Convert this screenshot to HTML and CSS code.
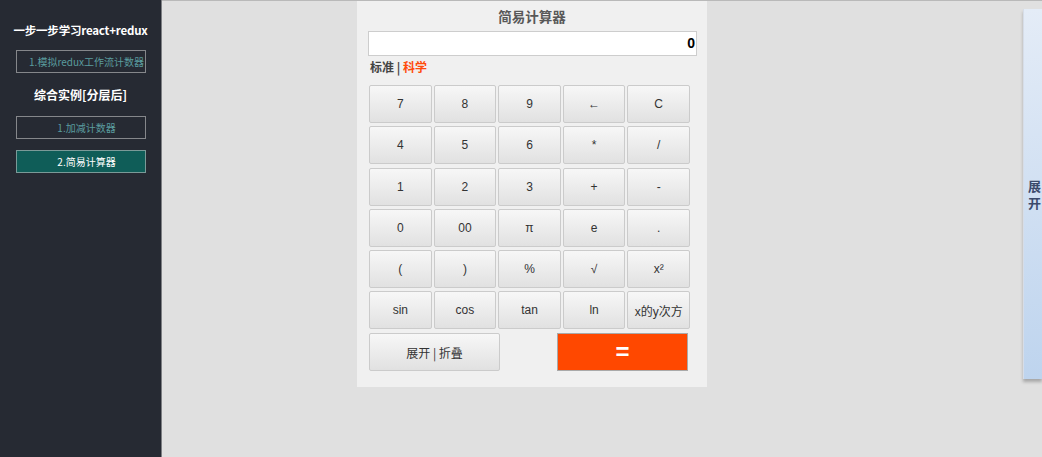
FILE: index.html
```html
<!DOCTYPE html>
<html lang="zh-CN">
<head>
<meta charset="utf-8">
<title>简易计算器</title>
<link rel="stylesheet" href="styles.css">
</head>
<body>
<div class="layout">
  <aside class="sidebar">
    <h1 class="side-title">一步一步学习react+redux</h1>
    <a class="side-link">1.模拟redux工作流计数器</a>
    <h2 class="side-sub">综合实例[分层后]</h2>
    <a class="side-link">1.加减计数器</a>
    <a class="side-link active">2.简易计算器</a>
  </aside>
  <main class="main">
    <section class="calc">
      <h3 class="calc-title">简易计算器</h3>
      <div class="display">0</div>
      <div class="modes"><span class="mode">标准</span> | <span class="mode on">科学</span></div>
      <div class="keys">
        <button class="key">7</button><button class="key">8</button><button class="key">9</button><button class="key">←</button><button class="key">C</button>
        <button class="key">4</button><button class="key">5</button><button class="key">6</button><button class="key">*</button><button class="key">/</button>
        <button class="key">1</button><button class="key">2</button><button class="key">3</button><button class="key">+</button><button class="key">-</button>
        <button class="key">0</button><button class="key">00</button><button class="key">π</button><button class="key">e</button><button class="key">.</button>
        <button class="key">(</button><button class="key">)</button><button class="key">%</button><button class="key">√</button><button class="key">x²</button>
        <button class="key">sin</button><button class="key">cos</button><button class="key">tan</button><button class="key">ln</button><button class="key">x的y次方</button>
      </div>
      <div class="bottom-row">
        <button class="key wide">展开 | 折叠</button>
        <button class="key wide equals">=</button>
      </div>
    </section>
  </main>
</div>
<div class="drawer-tab">展<br>开</div>
</body>
</html>
```
FILE: styles.css
```css
html, body {
  margin: 0;
  padding: 0;
  height: 100%;
}
body {
  background: #e0e0e0;
  font-family: "Noto Sans CJK SC", "Liberation Sans", sans-serif;
  overflow: hidden;
}
.layout {
  display: flex;
  height: 457px;
}
.sidebar {
  width: 161px;
  border-right: 1px solid #7d7f83;
  background: #262a33;
  display: flex;
  flex-direction: column;
  align-items: center;
  padding-top: 21px;
  box-sizing: content-box;
}
.side-title {
  margin: 0;
  font-size: 11.5px;
  font-weight: bold;
  color: #fff;
  line-height: 18px;
  letter-spacing: -0.2px;
}
.side-sub {
  margin: 12px 0 11px;
  font-size: 12px;
  font-weight: bold;
  color: #fff;
  line-height: 20px;
}
.side-link {
  display: block;
  border: 1px solid #85878b;
  color: #5a9c9e;
  font-size: 10px;
  text-align: center;
  padding-left: 12px;
  box-sizing: border-box;
  width: 130px;
  height: 23px;
  line-height: 21px;
  white-space: nowrap;
  overflow: hidden;
}
.side-title + .side-link {
  margin-top: 11px;
}
.side-link + .side-link {
  margin-top: 11px;
}
.side-link.active {
  background: #0f5d58;
  color: #fff;
  border-color: #7a9a98;
}
.main {
  flex: 1;
  border-top: 1px solid #b9b9b9;
  padding-left: 195px;
}
.calc {
  width: 350px;
  height: 386px;
  background: #f0f0f0;
  padding: 0 11px;
  box-sizing: border-box;
}
.calc-title {
  margin: 0;
  text-align: center;
  font-size: 13.5px;
  font-weight: bold;
  color: #585858;
  line-height: 30px;
}
.display {
  height: 25px;
  width: 329px;
  background: #fff;
  border: 1px solid #cdcdcd;
  box-sizing: border-box;
  text-align: right;
  font-family: "Liberation Sans", sans-serif;
  font-weight: bold;
  font-size: 14px;
  line-height: 23px;
  padding-right: 1px;
  color: #000;
}
.modes {
  margin: 1px 0 0 2px;
  font-size: 12px;
  font-weight: bold;
  color: #444;
  line-height: 20px;
}
.mode.on {
  color: #ff4a0a;
}
.keys {
  margin: 8px 0 0 1px;
  width: 321px;
  display: grid;
  grid-template-columns: repeat(5, 1fr);
  column-gap: 2px;
  row-gap: 3.3px;
}
.key {
  height: 38px;
  margin: 0;
  padding: 0;
  border: 1px solid #cbcbcb;
  border-radius: 2px;
  background: linear-gradient(#f7f7f7, #e1e1e1);
  font-family: "Liberation Sans", "Noto Sans CJK SC", sans-serif;
  font-size: 12px;
  color: #333;
  white-space: nowrap;
}
.bottom-row {
  margin: 4px 0 0 1px;
  width: 319px;
  display: flex;
  justify-content: space-between;
}
.key.wide {
  width: 131px;
  font-family: "Noto Sans CJK SC", "Liberation Sans", sans-serif;
}
.key.equals {
  background: #ff4800;
  border-color: #a9a9a9;
  border-radius: 0;
  color: #fff;
  font-family: "Liberation Sans", sans-serif;
  font-weight: bold;
  font-size: 24px;
}
.drawer-tab {
  position: absolute;
  right: 0;
  top: 9px;
  width: 14px;
  height: 370px;
  border-left: 1px solid #d6dde8;
  background: linear-gradient(#e4ecf7, #bed4ee);
  box-shadow: 0 3px 3px rgba(0, 0, 0, 0.25);
  color: #3b4a6b;
  font-weight: bold;
  font-size: 13px;
  line-height: 17px;
  display: flex;
  align-items: center;
  padding-left: 4px;
  box-sizing: content-box;
  overflow: visible;
}
```
